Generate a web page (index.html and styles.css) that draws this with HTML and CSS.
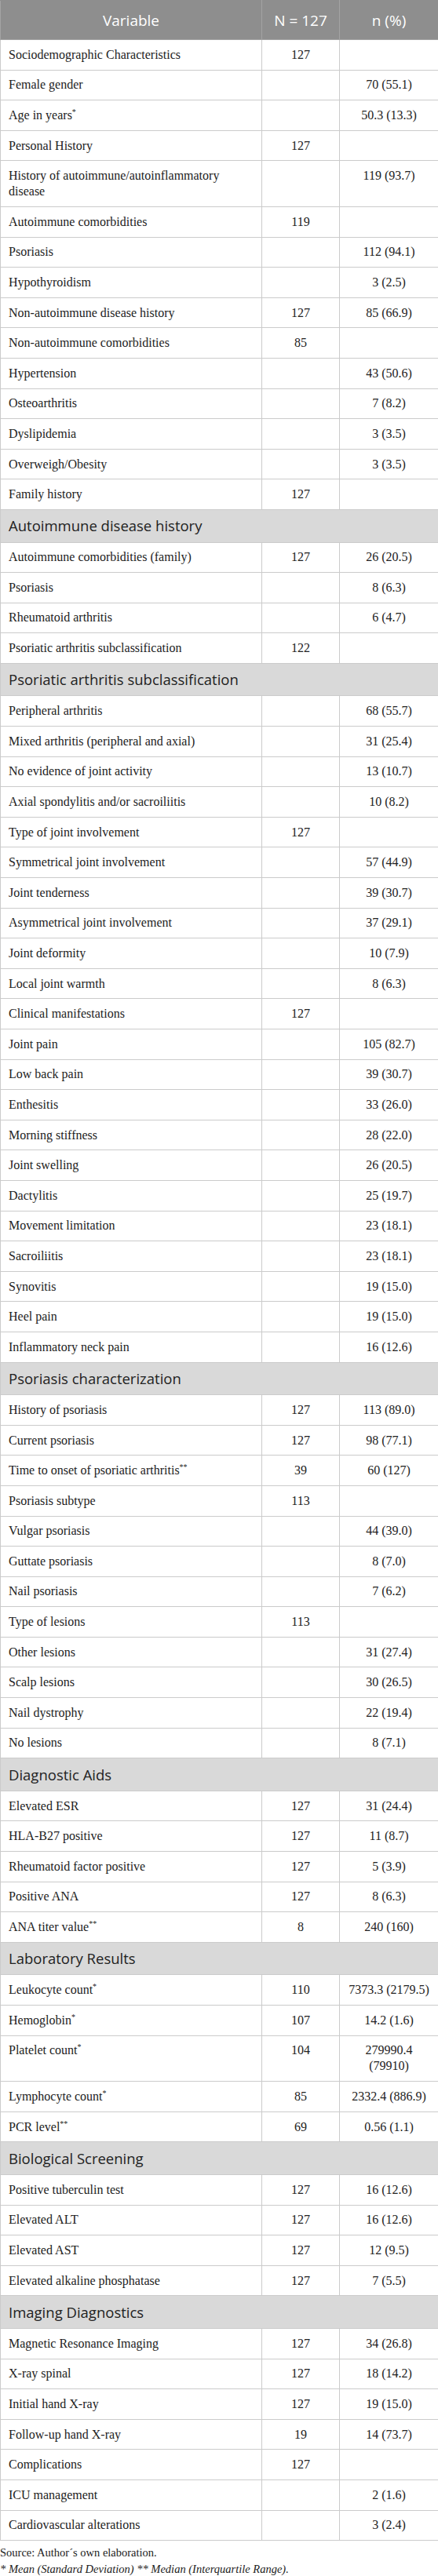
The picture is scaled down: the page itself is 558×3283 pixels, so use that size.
FILE: index.html
```html
<!DOCTYPE html>
<html lang="en">
<head>
<meta charset="utf-8">
<title>Table</title>
<link rel="stylesheet" href="styles.css">
</head>
<body>
<table class="data">
  <colgroup>
    <col class="c-var">
    <col class="c-n">
    <col class="c-pct">
  </colgroup>
  <thead>
    <tr><th>Variable</th><th>N = 127</th><th>n (%)</th></tr>
  </thead>
  <tbody>
    <tr><td>Sociodemographic Characteristics</td><td>127</td><td></td></tr>
    <tr><td>Female gender</td><td></td><td>70 (55.1)</td></tr>
    <tr><td>Age in years<sup>*</sup></td><td></td><td>50.3 (13.3)</td></tr>
    <tr><td>Personal History</td><td>127</td><td></td></tr>
    <tr><td>History of autoimmune/autoinflammatory disease</td><td></td><td>119 (93.7)</td></tr>
    <tr><td>Autoimmune comorbidities</td><td>119</td><td></td></tr>
    <tr><td>Psoriasis</td><td></td><td>112 (94.1)</td></tr>
    <tr><td>Hypothyroidism</td><td></td><td>3 (2.5)</td></tr>
    <tr><td>Non-autoimmune disease history</td><td>127</td><td>85 (66.9)</td></tr>
    <tr><td>Non-autoimmune comorbidities</td><td>85</td><td></td></tr>
    <tr><td>Hypertension</td><td></td><td>43 (50.6)</td></tr>
    <tr><td>Osteoarthritis</td><td></td><td>7 (8.2)</td></tr>
    <tr><td>Dyslipidemia</td><td></td><td>3 (3.5)</td></tr>
    <tr><td>Overweigh/Obesity</td><td></td><td>3 (3.5)</td></tr>
    <tr><td>Family history</td><td>127</td><td></td></tr>
    <tr class="section"><td colspan="3">Autoimmune disease history</td></tr>
    <tr><td>Autoimmune comorbidities (family)</td><td>127</td><td>26 (20.5)</td></tr>
    <tr><td>Psoriasis</td><td></td><td>8 (6.3)</td></tr>
    <tr><td>Rheumatoid arthritis</td><td></td><td>6 (4.7)</td></tr>
    <tr><td>Psoriatic arthritis subclassification</td><td>122</td><td></td></tr>
    <tr class="section"><td colspan="3">Psoriatic arthritis subclassification</td></tr>
    <tr><td>Peripheral arthritis</td><td></td><td>68 (55.7)</td></tr>
    <tr><td>Mixed arthritis (peripheral and axial)</td><td></td><td>31 (25.4)</td></tr>
    <tr><td>No evidence of joint activity</td><td></td><td>13 (10.7)</td></tr>
    <tr><td>Axial spondylitis and/or sacroiliitis</td><td></td><td>10 (8.2)</td></tr>
    <tr><td>Type of joint involvement</td><td>127</td><td></td></tr>
    <tr><td>Symmetrical joint involvement</td><td></td><td>57 (44.9)</td></tr>
    <tr><td>Joint tenderness</td><td></td><td>39 (30.7)</td></tr>
    <tr><td>Asymmetrical joint involvement</td><td></td><td>37 (29.1)</td></tr>
    <tr><td>Joint deformity</td><td></td><td>10 (7.9)</td></tr>
    <tr><td>Local joint warmth</td><td></td><td>8 (6.3)</td></tr>
    <tr><td>Clinical manifestations</td><td>127</td><td></td></tr>
    <tr><td>Joint pain</td><td></td><td>105 (82.7)</td></tr>
    <tr><td>Low back pain</td><td></td><td>39 (30.7)</td></tr>
    <tr><td>Enthesitis</td><td></td><td>33 (26.0)</td></tr>
    <tr><td>Morning stiffness</td><td></td><td>28 (22.0)</td></tr>
    <tr><td>Joint swelling</td><td></td><td>26 (20.5)</td></tr>
    <tr><td>Dactylitis</td><td></td><td>25 (19.7)</td></tr>
    <tr><td>Movement limitation</td><td></td><td>23 (18.1)</td></tr>
    <tr><td>Sacroiliitis</td><td></td><td>23 (18.1)</td></tr>
    <tr><td>Synovitis</td><td></td><td>19 (15.0)</td></tr>
    <tr><td>Heel pain</td><td></td><td>19 (15.0)</td></tr>
    <tr><td>Inflammatory neck pain</td><td></td><td>16 (12.6)</td></tr>
    <tr class="section"><td colspan="3">Psoriasis characterization</td></tr>
    <tr><td>History of psoriasis</td><td>127</td><td>113 (89.0)</td></tr>
    <tr><td>Current psoriasis</td><td>127</td><td>98 (77.1)</td></tr>
    <tr><td>Time to onset of psoriatic arthritis<sup>**</sup></td><td>39</td><td>60 (127)</td></tr>
    <tr><td>Psoriasis subtype</td><td>113</td><td></td></tr>
    <tr><td>Vulgar psoriasis</td><td></td><td>44 (39.0)</td></tr>
    <tr><td>Guttate psoriasis</td><td></td><td>8 (7.0)</td></tr>
    <tr><td>Nail psoriasis</td><td></td><td>7 (6.2)</td></tr>
    <tr><td>Type of lesions</td><td>113</td><td></td></tr>
    <tr><td>Other lesions</td><td></td><td>31 (27.4)</td></tr>
    <tr><td>Scalp lesions</td><td></td><td>30 (26.5)</td></tr>
    <tr><td>Nail dystrophy</td><td></td><td>22 (19.4)</td></tr>
    <tr><td>No lesions</td><td></td><td>8 (7.1)</td></tr>
    <tr class="section"><td colspan="3">Diagnostic Aids</td></tr>
    <tr><td>Elevated ESR</td><td>127</td><td>31 (24.4)</td></tr>
    <tr><td>HLA-B27 positive</td><td>127</td><td>11 (8.7)</td></tr>
    <tr><td>Rheumatoid factor positive</td><td>127</td><td>5 (3.9)</td></tr>
    <tr><td>Positive ANA</td><td>127</td><td>8 (6.3)</td></tr>
    <tr><td>ANA titer value<sup>**</sup></td><td>8</td><td>240 (160)</td></tr>
    <tr class="section"><td colspan="3">Laboratory Results</td></tr>
    <tr><td>Leukocyte count<sup>*</sup></td><td>110</td><td>7373.3 (2179.5)</td></tr>
    <tr><td>Hemoglobin<sup>*</sup></td><td>107</td><td>14.2 (1.6)</td></tr>
    <tr><td>Platelet count<sup>*</sup></td><td>104</td><td>279990.4 (79910)</td></tr>
    <tr><td>Lymphocyte count<sup>*</sup></td><td>85</td><td>2332.4 (886.9)</td></tr>
    <tr><td>PCR level<sup>**</sup></td><td>69</td><td>0.56 (1.1)</td></tr>
    <tr class="section"><td colspan="3">Biological Screening</td></tr>
    <tr><td>Positive tuberculin test</td><td>127</td><td>16 (12.6)</td></tr>
    <tr><td>Elevated ALT</td><td>127</td><td>16 (12.6)</td></tr>
    <tr><td>Elevated AST</td><td>127</td><td>12 (9.5)</td></tr>
    <tr><td>Elevated alkaline phosphatase</td><td>127</td><td>7 (5.5)</td></tr>
    <tr class="section"><td colspan="3">Imaging Diagnostics</td></tr>
    <tr><td>Magnetic Resonance Imaging</td><td>127</td><td>34 (26.8)</td></tr>
    <tr><td>X-ray spinal</td><td>127</td><td>18 (14.2)</td></tr>
    <tr><td>Initial hand X-ray</td><td>127</td><td>19 (15.0)</td></tr>
    <tr><td>Follow-up hand X-ray</td><td>19</td><td>14 (73.7)</td></tr>
    <tr><td>Complications</td><td>127</td><td></td></tr>
    <tr><td>ICU management</td><td></td><td>2 (1.6)</td></tr>
    <tr><td>Cardiovascular alterations</td><td></td><td>3 (2.4)</td></tr>
  </tbody>
</table>
<div class="notes">
  <p class="source">Source: Author´s own elaboration.</p>
  <p class="legend">* Mean (Standard Deviation) ** Median (Interquartile Range).</p>
</div>
</body>
</html>
```
FILE: styles.css
```css
html, body {
  margin: 0;
  padding: 0;
  background: #ffffff;
}

body {
  width: 558px;
  font-family: "Liberation Serif", "Times New Roman", serif;
  color: #222222;
}

.data {
  width: 558px;
  border-collapse: collapse;
  table-layout: fixed;
}

.c-var { width: 333px; }
.c-n { width: 99px; }
.c-pct { width: 126px; }

.data th {
  background: #8e8e8e;
  color: #ffffff;
  font-family: "Open Sans", "Noto Sans", sans-serif;
  font-weight: 400;
  font-size: 19px;
  line-height: 26px;
  padding: 11.5px 8px;
  text-align: center;
  border: 1px solid #a3a3a3;
  border-top-color: #8e8e8e;
}

.data td {
  font-size: 16px;
  line-height: 20px;
  padding: 8.8px 10px;
  border: 1px solid #cbcbcb;
  vertical-align: top;
  text-align: center;
}

.data td:first-child {
  text-align: left;
}

.data sup {
  font-size: 10px;
  line-height: 0;
  vertical-align: 6px;
}

.data tr.section td {
  background: #d9d9d9;
  font-family: "Open Sans", "Noto Sans", sans-serif;
  font-size: 18.5px;
  line-height: 24px;
  padding: 8.3px 10px;
  text-align: left;
  color: #222222;
}

.notes {
  padding-top: 5px;
}

.notes p {
  margin: 0;
  font-size: 14.5px;
  line-height: 21px;
  color: #222222;
}

.notes .legend {
  font-style: italic;
}
```
